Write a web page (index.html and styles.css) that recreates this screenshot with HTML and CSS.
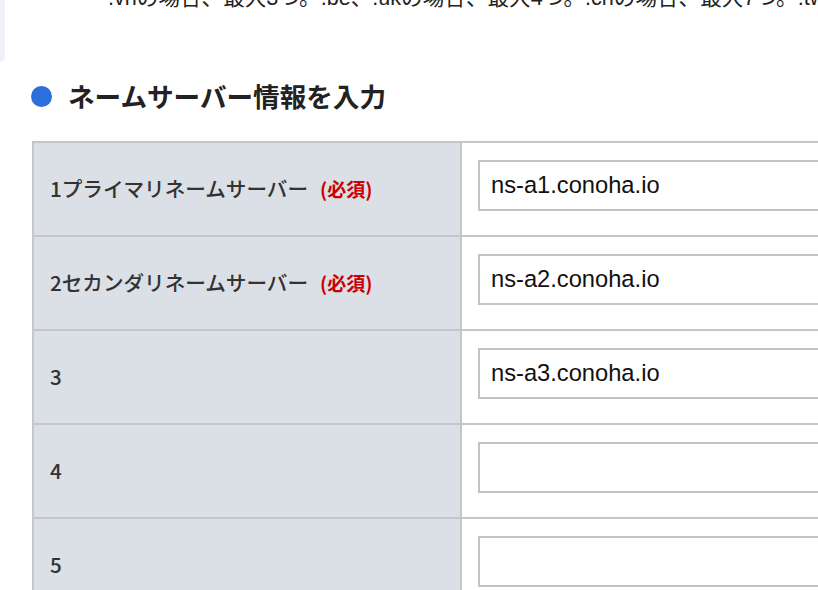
FILE: index.html
```html
<!DOCTYPE html>
<html lang="ja">
<head>
<meta charset="utf-8">
<link rel="stylesheet" href="styles.css">
</head>
<body>
<div class="top">
  <div class="panel-edge"></div>
  <p class="note">.vnの場合、最大3つ。.be、.ukの場合、最大4つ。.chの場合、最大7つ。.tw</p>
</div>
<h2 class="heading"><span class="dot"></span>ネームサーバー情報を入力</h2>
<table class="ns-table">
  <tr>
    <th>1プライマリネームサーバー<span class="req">(必須)</span></th>
    <td><input class="field" type="text" value="ns-a1.conoha.io"></td>
  </tr>
  <tr>
    <th>2セカンダリネームサーバー<span class="req">(必須)</span></th>
    <td><input class="field" type="text" value="ns-a2.conoha.io"></td>
  </tr>
  <tr>
    <th>3</th>
    <td><input class="field" type="text" value="ns-a3.conoha.io"></td>
  </tr>
  <tr>
    <th>4</th>
    <td><input class="field" type="text" value=""></td>
  </tr>
  <tr>
    <th>5</th>
    <td><input class="field" type="text" value=""></td>
  </tr>
</table>
</body>
</html>
```
FILE: styles.css
```css
html, body {
  margin: 0;
  padding: 0;
  background: #ffffff;
  overflow: hidden;
  width: 818px;
  height: 590px;
}
body {
  font-family: "Noto Sans CJK JP", "Noto Sans", sans-serif;
  color: #333333;
}
.top {
  display: flex;
  height: 62px;
  overflow: hidden;
}
.panel-edge {
  width: 5px;
  height: 62px;
  background: #eef1f5;
  border-bottom-right-radius: 6px;
  flex: none;
}
.note {
  margin: -16px 0 0 103px;
  white-space: nowrap;
  font-family: "Liberation Sans", "Noto Sans CJK JP", sans-serif;
  font-size: 21.6px;
  line-height: 28px;
  color: #222222;
}
.heading {
  display: flex;
  align-items: center;
  gap: 16px;
  margin: 19px 0 0 31px;
  height: 30px;
  font-size: 26.6px;
  font-weight: 700;
  color: #222222;
  line-height: 30px;
}
.dot {
  width: 21px;
  height: 21px;
  border-radius: 50%;
  background: #2b6fdc;
  flex: none;
}
.ns-table {
  margin: 30px 0 0 32px;
  border-collapse: collapse;
  width: 900px;
  table-layout: fixed;
}
.ns-table th, .ns-table td {
  border: 2px solid #c5c6c8;
  height: 93px;
  padding: 0;
  box-sizing: border-box;
}
.ns-table th {
  width: 428px;
  background: #dbdfe6;
  text-align: left;
  font-weight: 500;
  font-size: 20.6px;
  color: #333333;
  padding: 0 0 3px 16px;
  vertical-align: middle;
}
.ns-table td {
  background: #ffffff;
  padding: 17px 0 24px 16px;
  vertical-align: top;
}
.req {
  margin-left: 12px;
  color: #cc0000;
  font-weight: 700;
  font-size: 19px;
}
.field {
  display: block;
  box-sizing: border-box;
  width: 420px;
  height: 51px;
  border: 2px solid #c3c3c3;
  padding: 0 11px;
  font-family: "Liberation Sans", Arial, sans-serif;
  font-size: 23.7px;
  color: #111111;
  background: #fff;
  outline: none;
}
```
